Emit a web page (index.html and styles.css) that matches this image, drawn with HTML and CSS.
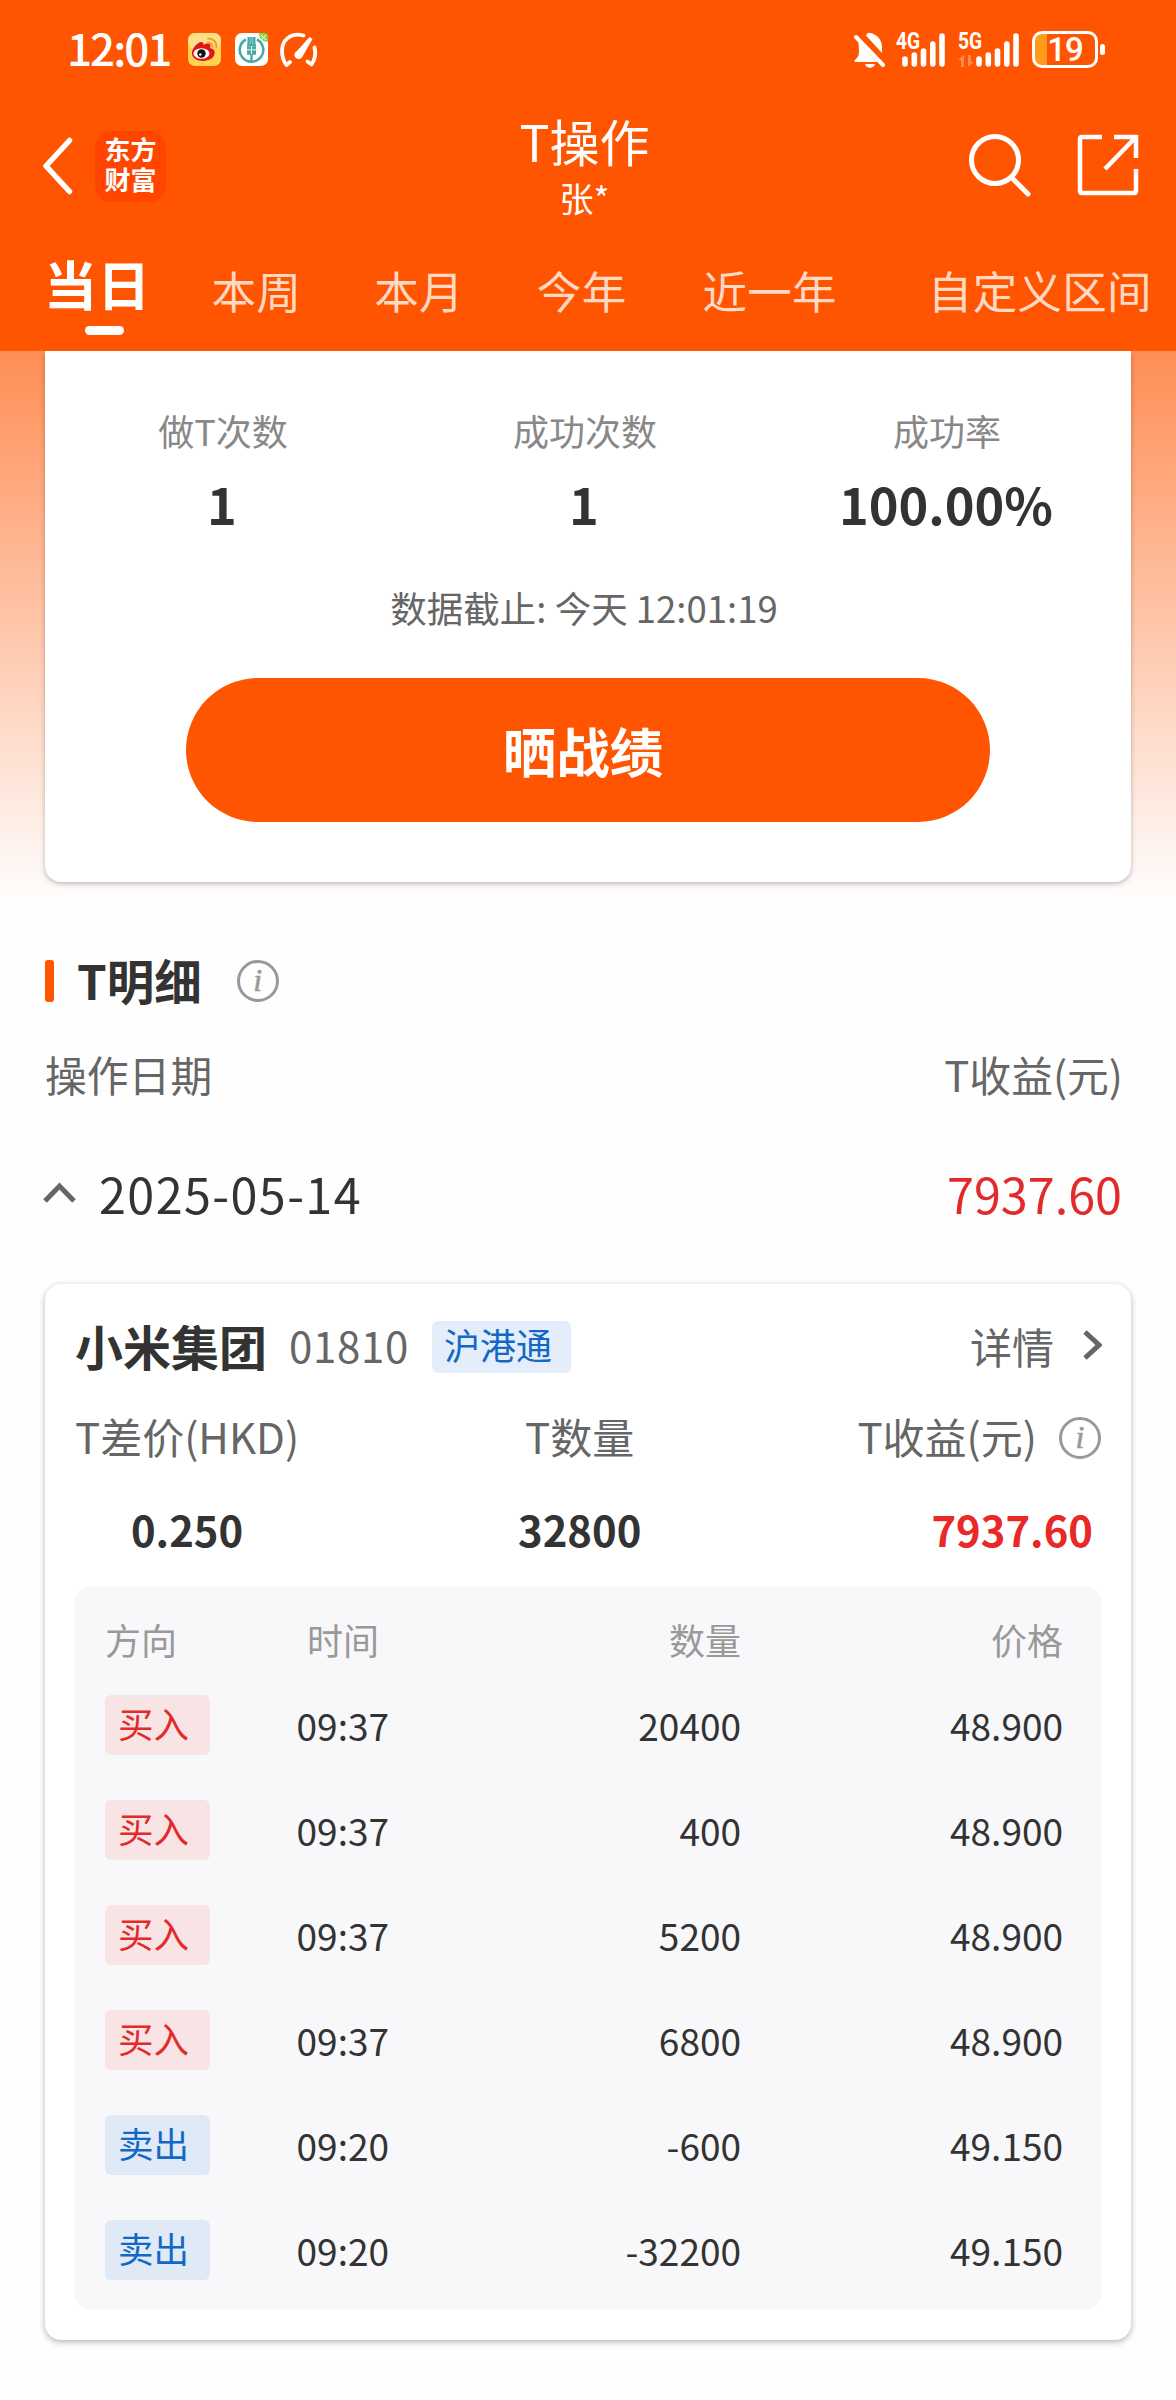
FILE: index.html
```html
<!DOCTYPE html>
<html lang="zh-CN">
<head>
  <meta charset="UTF-8" />
  <meta name="viewport" content="width=device-width, initial-scale=1.0"/>
  <title>T操作</title>
  <link rel="stylesheet" href="styles.css">
</head>
<body>
  <header class="header">
    <div class="status-bar">
      <span class="clock">12:01</span>
      <svg class="app-icon" width="33" height="33" viewBox="0 0 33 33">
        <rect width="33" height="33" rx="7" fill="#ffd34f"/>
        <rect width="33" height="16" rx="7" fill="#ffe08a"/>
        <path d="M4 19C5 14 10 9.500 13 9c2 0 3 1 2.500 3 4-2 7-2 7 1 0 1-1 2 0 2 3 1 5 3 4 6-1 5-7 7-12 7S3 25 4 19z" fill="#e0161c"/>
        <ellipse cx="13.500" cy="20.500" rx="8" ry="5.2" fill="#fff"/>
        <circle cx="13.500" cy="20.500" r="4.200" fill="#111"/>
        <circle cx="12.300" cy="21.500" r="1.200" fill="#fff"/>
        <path d="M20 9.500c3 0 5 2 4.500 5M20 5.500c6 0 9 4 8.300 9" fill="none" stroke="#f5a11c" stroke-width="2" stroke-linecap="round"/>
      </svg>
      <svg class="app-icon" width="33" height="33" viewBox="0 0 33 33">
        <rect width="33" height="33" rx="7" fill="#fff"/>
        <path d="M24 0h5a4 4 0 0 1 4 4v5c-5 0-9-3-9-9z" fill="#84d94f"/>
        <path d="M26 2l5 5M31 2l-5 5" stroke="#fff" stroke-width="1"/>
        <path d="M11 6.500a11.800 11.800 0 1 0 11 0" fill="none" stroke="#4aa9a5" stroke-width="2.600"/>
        <path d="M13.700 4v8M19.300 4v8M16.500 4v24M12 12.500h9M12 20.500h9" fill="none" stroke="#4aa9a5" stroke-width="2.400"/>
        <path d="M12 14h9v6h-9z" fill="#4aa9a5"/>
        <path d="M12 16.800h9M16.500 13v8" stroke="#fff" stroke-width="0.900"/>
      </svg>
      <svg class="gauge" width="40" height="36" viewBox="0 0 40 36">
        <g fill="none" stroke="#fff" stroke-width="3.800" stroke-linecap="round" stroke-linejoin="round">
          <path d="M24.500 3.500C11 0 3 9 3 18.500c0 6 1.500 11 4.500 14.500l3.500-3"/>
          <path d="M35.500 15.500c1.500 6 .5 12-3 17l-4-3"/>
        </g>
        <path d="M33.500 7L23.500 24.500a4.200 4.200 0 1 1-5.500-5.500L30.500 5z" fill="#fff"/>
      </svg>
      <svg class="status-right" width="32" height="36" viewBox="0 0 32 36">
        <path d="M12 3.500Q13.500 0 16 1c7 1 12 7 12 14v6zM4.500 10L23 30H2c-2 0-2-2 0-3 2-2 3-4 3-8zM11 32h10c-1 5-9 5-10 0z" fill="#fff"/>
        <path d="M2 5l27 28" stroke="#fff" stroke-width="4" stroke-linecap="round"/>
      </svg>
      <div class="signal signal-4g">
        <span>4G</span>
        <svg width="44" height="34" viewBox="0 0 44 34">
          <path d="M3 26v5M12.300 22v9M21.500 18v13M30.800 11v20M40 3v28" stroke="#fff" stroke-width="5.600" stroke-linecap="round"/>
        </svg>
      </div>
      <div class="signal signal-5g">
        <span>5G</span>
        <svg class="traffic" width="16" height="12" viewBox="0 0 16 12">
          <path d="M0 5l6-5v12H3V5zM16 7l-6 5V0h3v7z" fill="#ff8a50"/>
        </svg>
        <svg width="44" height="34" viewBox="0 0 44 34">
          <path d="M3 26v5M12.300 22v9M21.500 18v13M30.800 11v20M40 3v28" stroke="#fff" stroke-width="5.600" stroke-linecap="round"/>
        </svg>
      </div>
      <div class="battery"><span>19</span></div>
    </div>

    <div class="nav-bar">
      <div class="nav-left">
        <svg width="32" height="60" viewBox="0 0 32 60">
          <path d="M28.500 4.500L5 30l23.500 25.500" fill="none" stroke="#fff" stroke-width="5.500" stroke-linecap="round" stroke-linejoin="round"/>
        </svg>
        <div class="logo">东方<br>财富</div>
      </div>
      <div class="nav-title">
        <h1>T操作</h1>
        <p>张*</p>
      </div>
      <div class="nav-right">
        <svg width="64" height="64" viewBox="0 0 64 64">
          <circle cx="27" cy="27" r="23.500" fill="none" stroke="#fff" stroke-width="5"/>
          <path d="M43.500 44.500L60 61" stroke="#fff" stroke-width="5" stroke-linecap="round"/>
        </svg>
        <svg width="62" height="62" viewBox="0 0 62 62">
          <path d="M25 3H5q-2 0-2 2v52q0 2 2 2h52q2 0 2-2V35M37 3h22v21M58 4L28 35" fill="none" stroke="#fff" stroke-width="4.500"/>
        </svg>
      </div>
    </div>

    <nav class="tabs">
      <a class="tab active">当日</a>
      <a class="tab">本周</a>
      <a class="tab">本月</a>
      <a class="tab">今年</a>
      <a class="tab">近一年</a>
      <a class="tab">自定义区间</a>
    </nav>
  </header>

  <main>
    <section class="summary">
      <div class="stats">
        <div><p class="stat-label">做T次数</p><p class="stat-value">1</p></div>
        <div><p class="stat-label">成功次数</p><p class="stat-value">1</p></div>
        <div><p class="stat-label">成功率</p><p class="stat-value">100.00%</p></div>
      </div>
      <p class="deadline">数据截止: 今天 12:01:19</p>
      <button class="share-btn">晒战绩</button>
    </section>

    <div class="section-title">
      <h2>T明细</h2>
      <span class="info">i</span>
    </div>
    <div class="list-head"><span>操作日期</span><span>T收益(元)</span></div>
    <div class="date-row">
      <svg width="36" height="24" viewBox="0 0 36 24">
        <path d="M3 20L17.500 5 32 20" fill="none" stroke="#666" stroke-width="5"/>
      </svg>
      <span class="date">2025-05-14</span>
      <span class="profit">7937.60</span>
    </div>

    <section class="stock-card">
      <div class="stock-head">
        <h3>小米集团</h3>
        <span class="code">01810</span>
        <span class="market">沪港通</span>
        <a class="detail">详情
          <svg width="22" height="32" viewBox="0 0 22 32">
            <path d="M5 3l14 13L5 29" fill="none" stroke="#666" stroke-width="5"/>
          </svg>
        </a>
      </div>
      <div class="stock-stats">
        <div><p>T差价(HKD)</p><b>0.250</b></div>
        <div><p>T数量</p><b>32800</b></div>
        <div><p>T收益(元)<span class="info">i</span></p><b class="red">7937.60</b></div>
      </div>
      <table class="trades">
        <thead>
          <tr><th>方向</th><th>时间</th><th>数量</th><th>价格</th></tr>
        </thead>
        <tbody>
          <tr><td><span class="badge buy">买入</span></td><td>09:37</td><td>20400</td><td>48.900</td></tr>
          <tr><td><span class="badge buy">买入</span></td><td>09:37</td><td>400</td><td>48.900</td></tr>
          <tr><td><span class="badge buy">买入</span></td><td>09:37</td><td>5200</td><td>48.900</td></tr>
          <tr><td><span class="badge buy">买入</span></td><td>09:37</td><td>6800</td><td>48.900</td></tr>
          <tr><td><span class="badge sell">卖出</span></td><td>09:20</td><td>-600</td><td>49.150</td></tr>
          <tr><td><span class="badge sell">卖出</span></td><td>09:20</td><td>-32200</td><td>49.150</td></tr>
        </tbody>
      </table>
    </section>
  </main>
</body>
</html>
```
FILE: styles.css
```css
* {
  box-sizing: border-box;
}

body {
  margin: 0;
  width: 1176px;
  height: 2400px;
  overflow: hidden;
  font-family: "Noto Sans CJK SC", sans-serif;
  color: #333;
  background-color: #fefefe;
}

h1, h2, h3, p {
  margin: 0;
}

svg {
  display: block;
  flex: none;
}

/* Orange header */
.header {
  height: 351px;
  background-color: #ff5500;
  color: #fff;
}

.status-bar {
  display: flex;
  align-items: center;
  height: 99px;
  padding-left: 67px;
}

.clock {
  width: 121px;
  margin-top: -5px;
  font-size: 44px;
  line-height: 60px;
  font-weight: 500;
  letter-spacing: -2px;
}

.app-icon {
  margin-right: 14px;
}

.gauge {
  margin-left: -3px;
}

.status-right {
  margin-left: auto;
  margin-right: 10px;
}

.signal {
  position: relative;
  display: flex;
  justify-content: flex-end;
}

.signal span {
  position: absolute;
  left: 0;
  top: -2px;
  font: bold 24px/20px "Roboto", sans-serif;
  transform: scaleX(0.8);
  transform-origin: left;
}

.signal-4g {
  width: 50px;
  margin-right: 12px;
}

.signal-5g {
  width: 62px;
  margin-right: 12px;
}

.traffic {
  position: absolute;
  left: 0;
  bottom: 0;
}

/* Battery is 19% full */
.battery {
  position: relative;
  width: 66px;
  height: 37px;
  margin-right: 78px;
  border: 3px solid #fff;
  border-radius: 10px;
  background: linear-gradient(to right, #ff9a1a 12px, transparent 12px);
  text-align: center;
}

.battery span {
  display: block;
  font: 500 33px/32px "Roboto", sans-serif;
  letter-spacing: -1px;
}

.battery::after {
  content: "";
  position: absolute;
  right: -10px;
  top: 10px;
  width: 5px;
  height: 11px;
  border-radius: 3px;
  background-color: #fff;
}

.nav-bar {
  display: grid;
  grid-template-columns: 201px 1fr 208px;
  height: 134px;
}

.nav-left {
  display: flex;
  align-items: center;
  padding-left: 41px;
}

.logo {
  width: 71px;
  height: 71px;
  margin-left: 22px;
  padding-top: 5px;
  border-radius: 16px;
  background-color: #ff4500;
  font-family: "Liberation Sans", "Noto Sans CJK SC", sans-serif;
  font-size: 26px;
  font-weight: bold;
  line-height: 30px;
  text-align: center;
}

.nav-title {
  padding-top: 11px;
  text-align: center;
}

.nav-title h1 {
  font-size: 50px;
  font-weight: 400;
  line-height: 60px;
}

.nav-title p {
  margin-top: 6px;
  font-size: 34px;
  line-height: 44px;
}

.nav-right {
  display: flex;
  align-items: center;
  gap: 45px;
}

.nav-right svg {
  margin-top: -2px;
}

.tabs {
  display: flex;
  height: 118px;
  padding-left: 44px;
}

.tab {
  margin-right: 73px;
  font-size: 44.5px;
  line-height: 114px;
  letter-spacing: 0.3px;
  white-space: nowrap;
  color: #ffd9c4;
}

.tab.active {
  position: relative;
  margin-right: 61px;
  font-size: 53px;
  font-weight: bold;
  line-height: 101px;
  color: #fff;
}

.tab.active::after {
  content: "";
  position: absolute;
  left: 41px;
  bottom: 16px;
  width: 39px;
  height: 9px;
  border-radius: 5px;
  background-color: #fff;
}

.tab:nth-child(5) {
  margin-left: 3px;
}

.tab:last-child {
  margin-left: 18px;
  margin-right: 0;
}

/* Content, orange fades out behind the first card */
main {
  height: 2049px;
  padding: 0 45px;
  background: linear-gradient(#ff8e55, #fefefe 550px);
}

.summary {
  height: 531px;
  padding-top: 57px;
  border-radius: 0 0 16px 16px;
  background-color: #fff;
  box-shadow: 0 2px 5px rgba(0, 0, 0, 0.25);
  text-align: center;
  clip-path: inset(0 -10px -10px -10px);
}

.stats {
  display: grid;
  grid-template-columns: repeat(3, 1fr);
  margin: 0 3px 0 -3px;
}

.stat-label {
  font-size: 36px;
  line-height: 44px;
  color: #888;
}

.stat-value {
  margin: 21px 2px 0 0;
  font-size: 50.5px;
  font-weight: bold;
  line-height: 60px;
}

.deadline {
  margin: 53px 8px 0 0;
  font-size: 36.5px;
  line-height: 44px;
  color: #666;
}

.share-btn {
  display: block;
  width: 804px;
  height: 144px;
  margin: 48px auto 0;
  padding: 0 10px 2px 0;
  border: none;
  border-radius: 72px;
  background-color: #ff5500;
  color: #fff;
  font-family: inherit;
  font-size: 53.5px;
  font-weight: bold;
}

.section-title {
  display: flex;
  align-items: center;
  height: 42px;
  margin-top: 78px;
}

.section-title::before {
  content: "";
  width: 9px;
  height: 42px;
  margin-right: 23px;
  border-radius: 3px;
  background-color: #ff5500;
}

.section-title h2 {
  margin: -3px 35px 0 0;
  font-size: 47.5px;
  line-height: 60px;
}

.info {
  width: 42px;
  height: 42px;
  border: 3px solid #999;
  border-radius: 50%;
  font: italic 32px/34px "Liberation Serif", serif;
  -webkit-text-stroke: 0.6px #999;
  color: #999;
  text-align: center;
}

.list-head {
  display: flex;
  justify-content: space-between;
  margin-top: 42px;
  padding-right: 8px;
  font-size: 41.8px;
  line-height: 60px;
  color: #666;
}

.date-row {
  display: flex;
  align-items: center;
  height: 60px;
  margin-top: 59px;
  padding-right: 9px;
  font-size: 48.5px;
  line-height: 60px;
}

.date-row svg {
  margin-left: -3px;
}

.date {
  margin-left: 21px;
  letter-spacing: 1.4px;
}

.profit {
  margin-left: auto;
  color: #e22a2a;
}

/* Stock card */
.stock-card {
  height: 1056px;
  margin-top: 61px;
  padding: 31px 30px 0;
  border-radius: 16px;
  background-color: #fff;
  box-shadow: 0 2px 6px rgba(0, 0, 0, 0.3);
}

.stock-head {
  display: flex;
  align-items: center;
  height: 60px;
}

.stock-head h3 {
  font-size: 48px;
  line-height: 60px;
}

.code {
  margin-left: 22px;
  font-size: 42px;
  line-height: 60px;
  letter-spacing: 0.7px;
  color: #666;
}

.market {
  width: 139px;
  height: 52px;
  margin: 4px 0 0 23px;
  padding-left: 12px;
  border-radius: 6px;
  background-color: #e4eefa;
  font-size: 36px;
  line-height: 47px;
  color: #1368c6;
}

.detail {
  display: flex;
  align-items: center;
  gap: 26px;
  margin-left: auto;
  margin-right: -1px;
  font-size: 42px;
  color: #666;
}

.stock-stats {
  display: grid;
  grid-template-columns: 361px 1fr auto;
  height: 211px;
  padding-top: 31px;
}

.stock-stats div {
  width: max-content;
  text-align: center;
}

.stock-stats div:nth-child(2) {
  margin-left: 82px;
}

.stock-stats p {
  display: flex;
  align-items: center;
  justify-content: center;
  font-size: 42px;
  line-height: 60px;
  color: #666;
}

.stock-stats .info {
  margin: 3px 0 0 22px;
}

.stock-stats b {
  display: block;
  margin-top: 33px;
  font-size: 41.8px;
  line-height: 60px;
}

.stock-stats .red {
  padding-right: 8px;
  text-align: right;
  color: #e92828;
}

.trades {
  display: block;
  height: 724px;
  border-radius: 16px;
  background-color: #f8f8fb;
  font-size: 37px;
}

.trades thead, .trades tbody {
  display: block;
}

.trades tr {
  display: grid;
  grid-template-columns: 163px 160px 1fr 322px;
  align-items: center;
  height: 105px;
  padding: 0 38px 0 30px;
}

.trades thead tr {
  height: 86px;
  padding-top: 20px;
}

.trades th, .trades td {
  padding: 0;
  text-align: right;
}

.trades th {
  font-size: 36px;
  font-weight: 400;
  color: #999;
}

.trades th:first-child, .trades td:first-child {
  text-align: left;
}

.trades th:nth-child(2) {
  padding-right: 49px;
}

.trades td:nth-child(2) {
  padding-right: 39px;
}

.badge {
  display: block;
  width: 105px;
  height: 60px;
  padding-left: 13px;
  border-radius: 6px;
  font-size: 35.5px;
  line-height: 55px;
}

.buy {
  background-color: #f8e4e5;
  color: #e22a2a;
}

.sell {
  background-color: #dfeaf6;
  color: #1368c6;
}
```
